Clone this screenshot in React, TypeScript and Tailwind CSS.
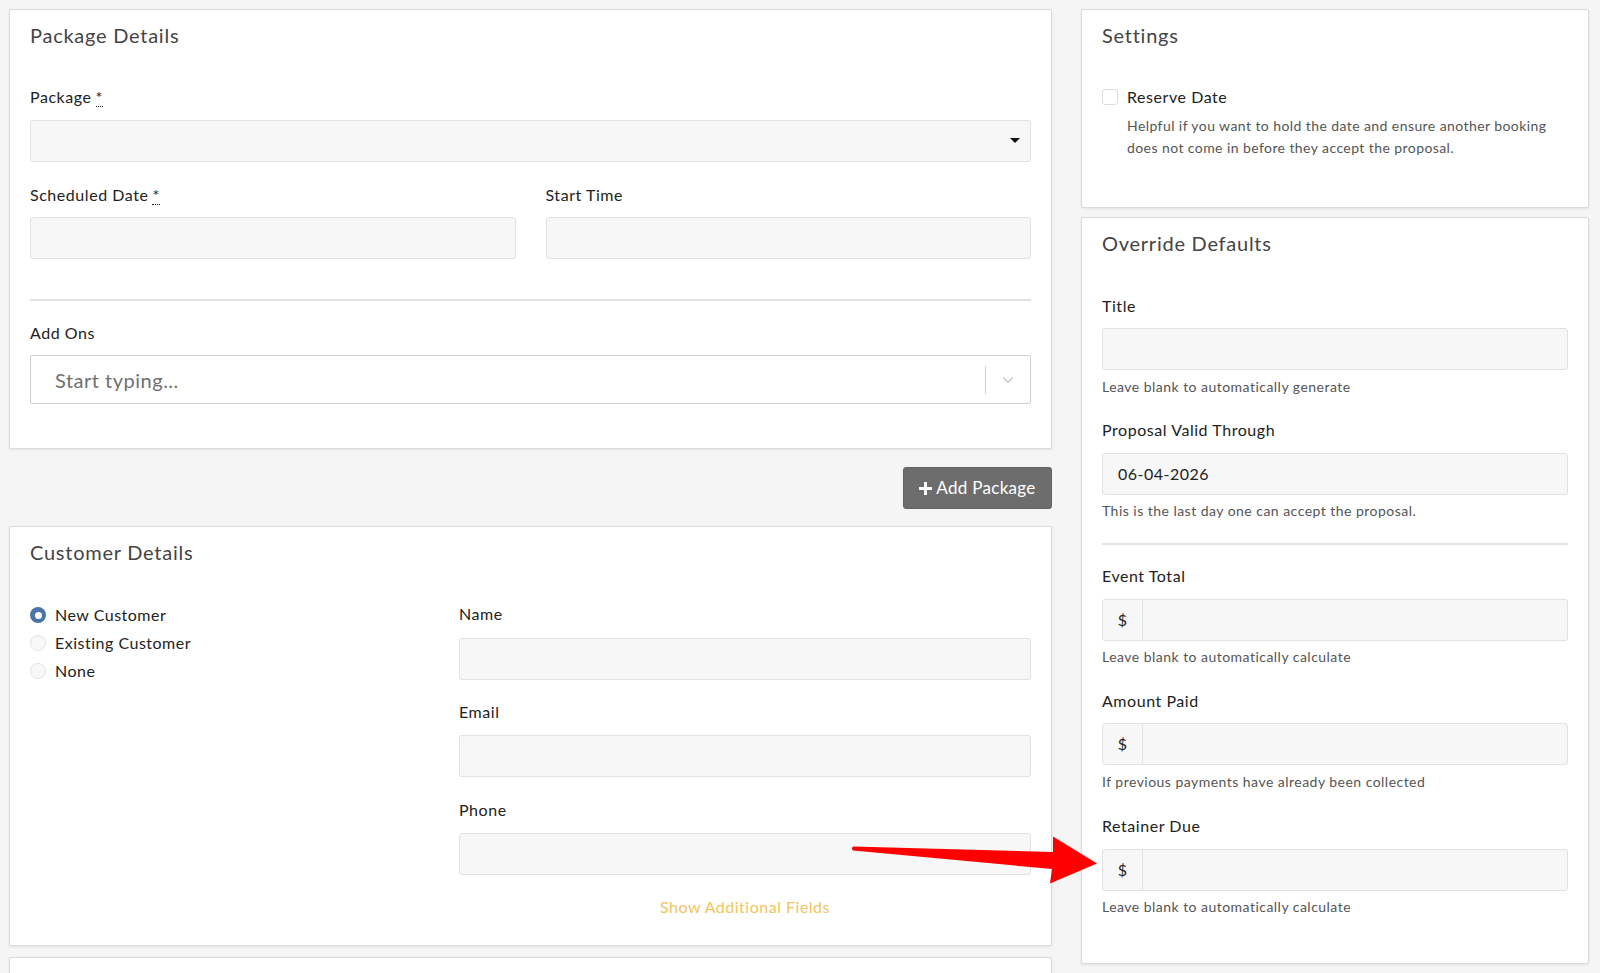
import React from "react";
import { ChevronDown } from "lucide-react";

const font = { fontFamily: "Lato, 'Open Sans', sans-serif" };

function Label({ children, className = "" }: { children: React.ReactNode; className?: string }) {
  return <div className={"text-[16px] leading-[20px] tracking-[0.55px] text-[#222] " + className}>{children}</div>;
}

function Req() {
  return (
    <abbr className="no-underline ml-[4px] border-b border-dotted border-[#222]" title="required">
      *
    </abbr>
  );
}

function Input({ className = "", children }: { className?: string; children?: React.ReactNode }) {
  return (
    <div className={"h-[42px] bg-[#f7f7f7] border border-[#e2e2e2] rounded-[3px] flex items-center " + className}>
      {children}
    </div>
  );
}

function MoneyInput() {
  return (
    <div className="h-[42px] bg-[#f7f7f7] border border-[#e2e2e2] rounded-[3px] flex items-stretch">
      <div className="w-[40px] flex items-center justify-center border-r border-[#e2e2e2] text-[16px] text-[#222]">$</div>
      <div className="flex-1" />
    </div>
  );
}

function Help({ children, className = "" }: { children: React.ReactNode; className?: string }) {
  return <div className={"text-[14px] leading-[18px] tracking-[0.47px] text-[#555] " + className}>{children}</div>;
}

function Panel({ children, className = "" }: { children: React.ReactNode; className?: string }) {
  return (
    <div className={"bg-white border border-[#dadada] rounded-[2px] shadow-[0_1px_3px_rgba(0,0,0,0.08)] " + className}>
      {children}
    </div>
  );
}

function Title({ children }: { children: React.ReactNode }) {
  return <div className="text-[20px] leading-[24px] tracking-[0.75px] text-[#444]">{children}</div>;
}

function Radio({ checked }: { checked?: boolean }) {
  return checked ? (
    <span className="w-[16px] h-[16px] rounded-full bg-[#4b75a6] flex items-center justify-center">
      <span className="w-[7px] h-[7px] rounded-full bg-white" />
    </span>
  ) : (
    <span className="w-[16px] h-[16px] rounded-full bg-[#f8f8f8] border border-[#e3e3e3]" />
  );
}

export default function App() {
  return (
    <div className="relative min-h-screen bg-[#f5f5f5] overflow-hidden" style={font}>
      <div className="flex gap-[29px] pl-[9px] pt-[9px]">
        {/* Left column */}
        <div className="w-[1043px] shrink-0 flex flex-col">
          <Panel className="px-[20px] pt-[13px] pb-[44px]">
            <Title>Package Details</Title>
            <Label className="mt-[40px]">
              Package
              <Req />
            </Label>
            <Input className="mt-[13px] justify-end pr-[10px]">
              <svg width="10" height="6" viewBox="0 0 10 6">
                <path d="M0 0 L10 0 L5 5 Z" fill="#111" />
              </svg>
            </Input>
            <div className="grid grid-cols-2 gap-[30px] mt-[23px]">
              <div>
                <Label>
                  Scheduled Date
                  <Req />
                </Label>
                <Input className="mt-[12px]" />
              </div>
              <div>
                <Label>Start Time</Label>
                <Input className="mt-[12px]" />
              </div>
            </div>
            <div className="mt-[40px] h-[2px] bg-[#e2e2e2]" />
            <Label className="mt-[22px]">Add Ons</Label>
            <div className="mt-[12px] h-[49px] bg-white border border-[#cfcfcf] rounded-[2px] flex items-center">
              <div className="flex-1 pl-[24px] text-[20px] tracking-[0.5px] text-[#707070]">Start typing...</div>
              <div className="w-px h-[28px] bg-[#d0d0d0]" />
              <div className="w-[44px] flex items-center justify-center">
                <ChevronDown size={18} strokeWidth={1.5} color="#c4c4c4" />
              </div>
            </div>
          </Panel>

          <div className="flex justify-end mt-[18px]">
            <button className="h-[42px] w-[149px] bg-[#6d6d6d] border border-[#626262] rounded-[3px] text-white text-[17px] tracking-[0.3px] flex items-center justify-center gap-[4px]">
              <svg width="13" height="13" viewBox="0 0 13 13">
                <path d="M5 0h3v5h5v3H8v5H5V8H0V5h5z" fill="white" />
              </svg>
              Add Package
            </button>
          </div>

          <Panel className="mt-[17px] px-[20px] pt-[13px] pb-[28px]">
            <Title>Customer Details</Title>
            <div className="flex mt-[40px]">
              <div className="w-[429px] flex flex-col -mt-[3px]">
                {[
                  ["New Customer", true],
                  ["Existing Customer", false],
                  ["None", false],
                ].map(([l, c]) => (
                  <div key={l as string} className="flex items-center gap-[9px] h-[28px] text-[16px] tracking-[0.5px] text-[#222]">
                    <Radio checked={c as boolean} />
                    <span>{l as string}</span>
                  </div>
                ))}
              </div>
              <div className="flex-1">
                <Label>Name</Label>
                <Input className="mt-[14px]" />
                <Label className="mt-[22px]">Email</Label>
                <Input className="mt-[13px]" />
                <Label className="mt-[23px]">Phone</Label>
                <Input className="mt-[13px]" />
                <div className="mt-[22px] text-center text-[16px] leading-[20px] tracking-[0.5px] text-[#f2c45e]">Show Additional Fields</div>
              </div>
            </div>
          </Panel>

          <Panel className="mt-[11px] h-[80px]">
            <div />
          </Panel>
        </div>

        {/* Right column */}
        <div className="w-[508px] shrink-0 flex flex-col">
          <Panel className="px-[20px] pt-[13px] pb-[48px]">
            <Title>Settings</Title>
            <div className="mt-[40px] flex gap-[9px]">
              <span className="mt-[2px] w-[16px] h-[16px] rounded-[3px] border border-[#dcdcdc] bg-white shrink-0" />
              <div>
                <div className="text-[16px] leading-[20px] tracking-[0.55px] text-[#222]">Reserve Date</div>
                <div className="mt-[8px] text-[14px] leading-[22px] tracking-[0.42px] text-[#555]">
                  Helpful if you want to hold the date and ensure another booking
                  <br />
                  does not come in before they accept the proposal.
                </div>
              </div>
            </div>
          </Panel>

          <Panel className="mt-[9px] px-[20px] pt-[13px] pb-[47px]">
            <Title>Override Defaults</Title>
            <Label className="mt-[41px]">Title</Label>
            <Input className="mt-[12px]" />
            <Help className="mt-[8px]">Leave blank to automatically generate</Help>
            <Label className="mt-[24px]">Proposal Valid Through</Label>
            <Input className="mt-[13px] pl-[15px] text-[16px] tracking-[0.5px] text-[#222]">06-04-2026</Input>
            <Help className="mt-[7px]">This is the last day one can accept the proposal.</Help>
            <div className="mt-[23px] h-[2px] bg-[#e2e2e2]" />
            <Label className="mt-[21px]">Event Total</Label>
            <div className="mt-[13px]">
              <MoneyInput />
            </div>
            <Help className="mt-[7px]">Leave blank to automatically calculate</Help>
            <Label className="mt-[25px]">Amount Paid</Label>
            <div className="mt-[12px]">
              <MoneyInput />
            </div>
            <Help className="mt-[8px]">If previous payments have already been collected</Help>
            <Label className="mt-[25px]">Retainer Due</Label>
            <div className="mt-[13px]">
              <MoneyInput />
            </div>
            <Help className="mt-[7px]">Leave blank to automatically calculate</Help>
          </Panel>
        </div>
      </div>

      {/* Red annotation arrow */}
      <svg className="absolute left-0 top-0 pointer-events-none" width="1600" height="973" viewBox="0 0 1600 973">
        <path
          d="M853 846.5 L1053 852 L1053 836.5 L1097 863.5 L1050 883.5 L1052 869 L853 850.5 Q851 848.5 853 846.5 Z"
          fill="#ff0000"
        />
      </svg>
    </div>
  );
}
